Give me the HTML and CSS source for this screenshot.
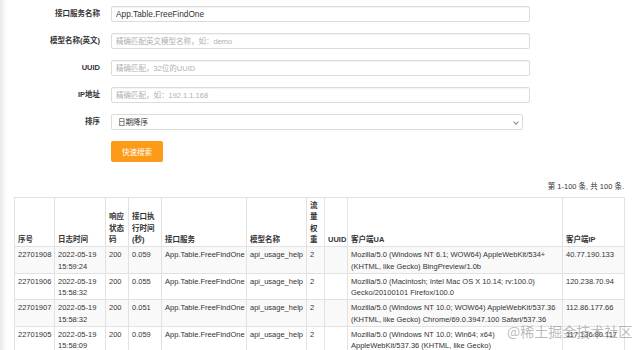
FILE: index.html
```html
<!DOCTYPE html>
<html lang="zh-CN">
<head>
    <meta charset="UTF-8">
    <meta name="viewport" content="width=device-width, initial-scale=1.0">
    <title>接口日志</title>
    <link rel="stylesheet" href="styles.css">
</head>
<body>
    <form class="busca">
        <label class="rotulo">接口服务名称</label>
        <input class="campo" type="text" value="App.Table.FreeFindOne">

        <label class="rotulo">模型名称(英文)</label>
        <input class="campo" type="text" placeholder="精确匹配英文模型名称，如：demo">

        <label class="rotulo">UUID</label>
        <input class="campo" type="text" placeholder="精确匹配，32位的UUID">

        <label class="rotulo">IP地址</label>
        <input class="campo" type="text" placeholder="精确匹配，如：192.1.1.168">

        <label class="rotulo">排序</label>
        <div class="caixa_select">
            <select class="select">
                <option>日期降序</option>
                <option>日期升序</option>
            </select>
        </div>

        <button class="btn_buscar" type="button">快速搜索</button>
    </form>

    <p class="resumo">第 1-100 条, 共 100 条.</p>

    <table class="tabela">
        <colgroup>
            <col style="width:40px">
            <col style="width:51px">
            <col style="width:23px">
            <col style="width:33px">
            <col style="width:85px">
            <col style="width:60px">
            <col style="width:18px">
            <col style="width:23px">
            <col style="width:215px">
            <col style="width:62px">
        </colgroup>
        <thead>
            <tr>
                <th>序号</th>
                <th>日志时间</th>
                <th>响应状态码</th>
                <th>接口执行时间(秒)</th>
                <th>接口服务</th>
                <th>模型名称</th>
                <th>流量权重</th>
                <th class="sem_quebra">UUID</th>
                <th>客户端UA</th>
                <th>客户端IP</th>
            </tr>
        </thead>
        <tbody>
            <tr>
                <td>22701908</td>
                <td>2022-05-19 15:59:24</td>
                <td>200</td>
                <td>0.059</td>
                <td class="sem_quebra">App.Table.FreeFindOne</td>
                <td class="sem_quebra">api_usage_help</td>
                <td>2</td>
                <td></td>
                <td>Mozilla/5.0 (Windows NT 6.1; WOW64) AppleWebKit/534+ (KHTML, like Gecko) BingPreview/1.0b</td>
                <td>40.77.190.133</td>
            </tr>
            <tr>
                <td>22701906</td>
                <td>2022-05-19 15:58:32</td>
                <td>200</td>
                <td>0.055</td>
                <td class="sem_quebra">App.Table.FreeFindOne</td>
                <td class="sem_quebra">api_usage_help</td>
                <td>2</td>
                <td></td>
                <td>Mozilla/5.0 (Macintosh; Intel Mac OS X 10.14; rv:100.0) Gecko/20100101 Firefox/100.0</td>
                <td>120.238.70.94</td>
            </tr>
            <tr>
                <td>22701907</td>
                <td>2022-05-19 15:58:32</td>
                <td>200</td>
                <td>0.051</td>
                <td class="sem_quebra">App.Table.FreeFindOne</td>
                <td class="sem_quebra">api_usage_help</td>
                <td>2</td>
                <td></td>
                <td>Mozilla/5.0 (Windows NT 10.0; WOW64) AppleWebKit/537.36 (KHTML, like Gecko) Chrome/69.0.3947.100 Safari/537.36</td>
                <td>112.86.177.66</td>
            </tr>
            <tr>
                <td>22701905</td>
                <td>2022-05-19 15:58:09</td>
                <td>200</td>
                <td>0.059</td>
                <td class="sem_quebra">App.Table.FreeFindOne</td>
                <td class="sem_quebra">api_usage_help</td>
                <td>2</td>
                <td></td>
                <td>Mozilla/5.0 (Windows NT 10.0; Win64; x64) AppleWebKit/537.36 (KHTML, like Gecko) Chrome/101.0.4951.67 Safari/537.36</td>
                <td>117.136.80.117</td>
            </tr>
        </tbody>
    </table>

    <div class="marca">@稀土掘金技术社区</div>
</body>
</html>
```

FILE: styles.css
```css
*{
    margin: 0;
    padding: 0;
    box-sizing: border-box;
}
body{
    font-family: "Liberation Sans", "Noto Sans CJK SC", sans-serif;
    font-size: 7.5px;
    line-height: 11.5px;
    color: #333;
    background: linear-gradient(to right, #e9e9e9 0, #f7f7f7 4px, #fff 7px);
    height: 350px;
    overflow: hidden;
}
.busca{
    display: grid;
    grid-template-columns: 100px 419px;
    column-gap: 11px;
    row-gap: 11px;
    align-items: center;
    padding-top: 6px;
}
.rotulo{
    text-align: right;
    font-weight: bold;
}
.campo{
    height: 16px;
    border: 1px solid #dcdcdc;
    border-radius: 2px;
    box-shadow: inset 0 1px 1px rgba(0,0,0,0.05);
    padding: 0 4px;
    font-family: "Liberation Sans", "Noto Sans CJK SC", sans-serif;
    font-size: 8.3px;
    color: #333;
    outline: none;
}
.campo::placeholder{
    font-size: 7.5px;
    color: #b0b0b0;
}
.caixa_select{
    width: 412px;
    position: relative;
}
.caixa_select::after{
    content: "";
    position: absolute;
    right: 5px;
    top: 6px;
    width: 3px;
    height: 3px;
    border-right: 1px solid #888;
    border-bottom: 1px solid #888;
    transform: rotate(45deg);
}
.select{
    appearance: none;
    width: 100%;
    height: 16px;
    border: 1px solid #dcdcdc;
    border-radius: 2px;
    background-color: #fff;
    padding: 0 6px;
    font-family: "Liberation Sans", "Noto Sans CJK SC", sans-serif;
    font-size: 7.5px;
    color: #333;
    outline: none;
}
.btn_buscar{
    grid-column: 2;
    width: 52px;
    height: 21px;
    border: none;
    border-radius: 2px;
    background-color: #fd9a17;
    color: #fff;
    font-family: "Liberation Sans", "Noto Sans CJK SC", sans-serif;
    font-size: 7.5px;
}
.resumo{
    width: 624px;
    margin-top: 19px;
    text-align: right;
}
.tabela{
    margin-top: 4px;
    margin-left: 14px;
    width: 610px;
    table-layout: fixed;
    border-collapse: collapse;
    border: 1px solid #e2e2e2;
}
.tabela th,
.tabela td{
    border: 1px solid #e2e2e2;
    padding: 2px 1px 0.5px 3px;
    text-align: left;
    word-wrap: break-word;
}
.tabela th{
    vertical-align: bottom;
    font-weight: bold;
}
.tabela td{
    vertical-align: top;
}
.tabela tbody tr:nth-child(odd){
    background-color: #f9f9f9;
}
.sem_quebra{
    white-space: nowrap;
}
.marca{
    position: absolute;
    left: 507px;
    top: 321px;
    font-family: "Noto Sans CJK SC", sans-serif;
    font-size: 14px;
    line-height: 20px;
    color: rgba(140,140,140,0.6);
}
```
